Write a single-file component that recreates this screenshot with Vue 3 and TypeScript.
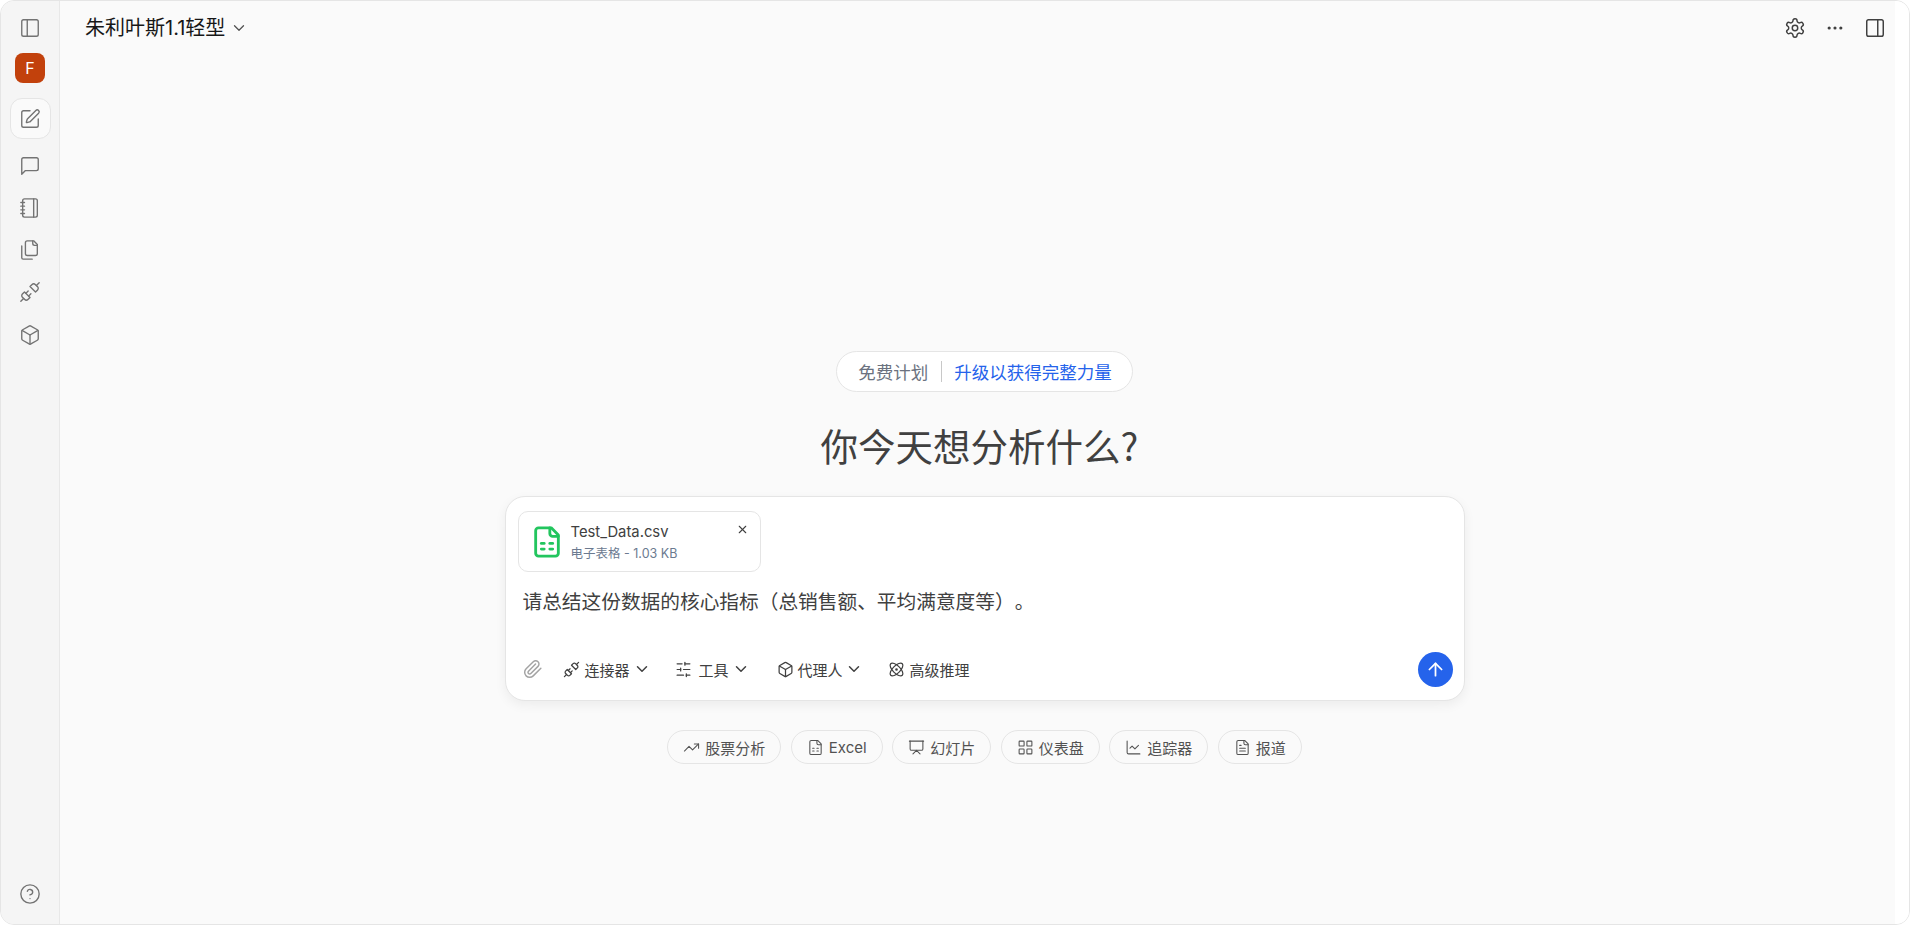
<script setup lang="ts">
import { h } from 'vue'
import type { FunctionalComponent } from 'vue'

const rect = 'M5 3h14a2 2 0 0 1 2 2v14a2 2 0 0 1-2 2H5a2 2 0 0 1-2-2V5a2 2 0 0 1 2-2z'
const icons: Record<string, string[]> = {
  panelLeft: [rect, 'M9 3v18'],
  panelRight: [rect, 'M15 3v18'],
  pen: ['M12 3H5a2 2 0 0 0-2 2v14a2 2 0 0 0 2 2h14a2 2 0 0 0 2-2v-7', 'M18.375 2.625a1 1 0 0 1 3 3l-9.013 9.014a2 2 0 0 1-.853.505l-2.873.84a.5.5 0 0 1-.62-.62l.84-2.873a2 2 0 0 1 .506-.852z'],
  chat: ['M21 15a2 2 0 0 1-2 2H7l-4 4V5a2 2 0 0 1 2-2h14a2 2 0 0 1 2 2z'],
  notebook: ['M2 6h4', 'M2 10h4', 'M2 14h4', 'M2 18h4', 'M6 2h12a2 2 0 0 1 2 2v16a2 2 0 0 1-2 2H6a2 2 0 0 1-2-2V4a2 2 0 0 1 2-2z', 'M16 2v20'],
  files: ['M20 7h-3a2 2 0 0 1-2-2V2', 'M9 18a2 2 0 0 1-2-2V4a2 2 0 0 1 2-2h7l4 4v10a2 2 0 0 1-2 2Z', 'M3 7.6v12.8A1.6 1.6 0 0 0 4.6 22h9.8'],
  plug: ['M19 5l3-3', 'm2 22 3-3', 'M6.3 20.3a2.4 2.4 0 0 0 3.4 0L12 18l-6-6-2.3 2.3a2.4 2.4 0 0 0 0 3.4Z', 'M7.5 13.5 10 11', 'M10.5 16.5 13 14', 'm12 6 6 6 2.3-2.3a2.4 2.4 0 0 0 0-3.4l-2.6-2.6a2.4 2.4 0 0 0-3.4 0Z'],
  box: ['M21 8a2 2 0 0 0-1-1.73l-7-4a2 2 0 0 0-2 0l-7 4A2 2 0 0 0 3 8v8a2 2 0 0 0 1 1.73l7 4a2 2 0 0 0 2 0l7-4A2 2 0 0 0 21 16Z', 'm3.3 7 8.7 5 8.7-5', 'M12 22V12'],
  help: ['M2 12a10 10 0 1 0 20 0a10 10 0 1 0-20 0', 'M9.09 9a3 3 0 0 1 5.83 1c0 2-3 3-3 3', 'M12 17h.01'],
  gear: ['M12.22 2h-.44a2 2 0 0 0-2 2v.18a2 2 0 0 1-1 1.73l-.43.25a2 2 0 0 1-2 0l-.15-.08a2 2 0 0 0-2.73.73l-.22.38a2 2 0 0 0 .73 2.73l.15.1a2 2 0 0 1 1 1.72v.51a2 2 0 0 1-1 1.74l-.15.09a2 2 0 0 0-.73 2.73l.22.38a2 2 0 0 0 2.73.73l.15-.08a2 2 0 0 1 2 0l.43.25a2 2 0 0 1 1 1.73V20a2 2 0 0 0 2 2h.44a2 2 0 0 0 2-2v-.18a2 2 0 0 1 1-1.73l.43-.25a2 2 0 0 1 2 0l.15.08a2 2 0 0 0 2.73-.73l.22-.39a2 2 0 0 0-.73-2.73l-.15-.08a2 2 0 0 1-1-1.74v-.5a2 2 0 0 1 1-1.74l.15-.09a2 2 0 0 0 .73-2.73l-.22-.38a2 2 0 0 0-2.73-.73l-.15.08a2 2 0 0 1-2 0l-.43-.25a2 2 0 0 1-1-1.73V4a2 2 0 0 0-2-2z', 'M9 12a3 3 0 1 0 6 0a3 3 0 1 0-6 0'],
  chevron: ['m6 9 6 6 6-6'],
  close: ['M18 6 6 18', 'm6 6 12 12'],
  sheet: ['M15 2H6a2 2 0 0 0-2 2v16a2 2 0 0 0 2 2h12a2 2 0 0 0 2-2V7Z', 'M14 2v4a2 2 0 0 0 2 2h4', 'M8 13h2', 'M14 13h2', 'M8 17h2', 'M14 17h2'],
  clip: ['m21.44 11.05-9.19 9.19a6 6 0 0 1-8.49-8.49l8.57-8.57A4 4 0 1 1 18 8.84l-8.59 8.57a2 2 0 0 1-2.83-2.83l8.49-8.48'],
  sliders: ['M21 4h-7', 'M10 4H3', 'M21 12h-9', 'M8 12H3', 'M21 20h-5', 'M12 20H3', 'M14 2v4', 'M8 10v4', 'M16 18v4'],
  atom: ['M11 12a1 1 0 1 0 2 0a1 1 0 1 0-2 0', 'M20.2 20.2c2.04-2.03.02-7.36-4.5-11.9-4.54-4.52-9.87-6.54-11.9-4.5-2.04 2.03-.02 7.36 4.5 11.9 4.54 4.52 9.87 6.54 11.9 4.5Z', 'M15.7 15.7c4.52-4.54 6.54-9.87 4.5-11.9-2.03-2.04-7.36-.02-11.9 4.5-4.52 4.54-6.54 9.87-4.5 11.9 2.03 2.04 7.36.02 11.9-4.5Z'],
  trend: ['M22 7 13.5 15.5 8.5 10.5 2 17', 'M16 7h6v6'],
  slides: ['M2 3h20', 'M21 3v11a2 2 0 0 1-2 2H5a2 2 0 0 1-2-2V3', 'm7 21 5-5 5 5'],
  grid: ['M4 3h5a1 1 0 0 1 1 1v5a1 1 0 0 1-1 1H4a1 1 0 0 1-1-1V4a1 1 0 0 1 1-1z', 'M15 3h5a1 1 0 0 1 1 1v5a1 1 0 0 1-1 1h-5a1 1 0 0 1-1-1V4a1 1 0 0 1 1-1z', 'M15 14h5a1 1 0 0 1 1 1v5a1 1 0 0 1-1 1h-5a1 1 0 0 1-1-1v-5a1 1 0 0 1 1-1z', 'M4 14h5a1 1 0 0 1 1 1v5a1 1 0 0 1-1 1H4a1 1 0 0 1-1-1v-5a1 1 0 0 1 1-1z'],
  chart: ['M3 3v16a2 2 0 0 0 2 2h16', 'm19 9-5 5-4-4-3 3'],
  doc: ['M15 2H6a2 2 0 0 0-2 2v16a2 2 0 0 0 2 2h12a2 2 0 0 0 2-2V7Z', 'M14 2v4a2 2 0 0 0 2 2h4', 'M10 9H8', 'M16 13H8', 'M16 17H8'],
  up: ['m5 12 7-7 7 7', 'M12 19V5'],
}

const Icon: FunctionalComponent<{ name: string; size?: number; sw?: number }> = (p) =>
  h(
    'svg',
    {
      width: p.size ?? 20,
      height: p.size ?? 20,
      viewBox: '0 0 24 24',
      fill: 'none',
      stroke: 'currentColor',
      'stroke-width': p.sw ?? 1.75,
      'stroke-linecap': 'round',
      'stroke-linejoin': 'round',
    },
    icons[p.name].map((d) => h('path', { d })),
  )
Icon.props = ['name', 'size', 'sw']

const navIcons = ['chat', 'notebook', 'files', 'plug', 'box']
const tools = [
  { icon: 'plug', label: '连接器', arrow: true, cls: 'tool-a' },
  { icon: 'sliders', label: '工具', arrow: true, cls: 'tool-b' },
  { icon: 'box', label: '代理人', arrow: true, cls: 'tool-c' },
  { icon: 'atom', label: '高级推理', arrow: false, cls: 'tool-d' },
]
const chips = [
  { icon: 'trend', label: '股票分析' },
  { icon: 'sheet', label: 'Excel' },
  { icon: 'slides', label: '幻灯片' },
  { icon: 'grid', label: '仪表盘' },
  { icon: 'chart', label: '追踪器' },
  { icon: 'doc', label: '报道' },
]
</script>

<template>
  <div class="shell">
    <aside class="side">
      <div class="side-icon first"><Icon name="panelLeft" :size="22" :sw="1.5" /></div>
      <div class="avatar">F</div>
      <div class="new-btn"><Icon name="pen" :size="22" :sw="1.5" /></div>
      <nav class="nav">
        <div v-for="n in navIcons" :key="n" class="side-icon"><Icon :name="n" :size="22" :sw="1.5" /></div>
      </nav>
      <div class="side-icon help"><Icon name="help" :size="22" :sw="1.5" /></div>
    </aside>

    <main class="main">
      <header class="top">
        <div class="title">
          <span>朱利叶斯1.1轻型</span>
          <Icon name="chevron" :size="18" :sw="1.75" class="title-chev" />
        </div>
        <div class="top-right">
          <Icon name="gear" :size="22" :sw="1.6" />
          <svg width="20" height="20" viewBox="0 0 24 24" fill="currentColor" aria-hidden="true">
            <circle cx="5" cy="12" r="1.9" /><circle cx="12" cy="12" r="1.9" /><circle cx="19" cy="12" r="1.9" />
          </svg>
          <Icon name="panelRight" :size="22" :sw="1.6" />
        </div>
      </header>

      <section class="stage">
        <div class="plan">
          <span class="plan-free">免费计划</span>
          <span class="plan-div"></span>
          <span class="plan-up">升级以获得完整力量</span>
        </div>
        <h1 class="headline">你今天想分析什么?</h1>

        <div class="card">
          <div class="attach">
            <Icon name="sheet" :size="34" :sw="2" class="attach-icon" />
            <div class="attach-text">
              <div class="attach-name">Test_Data.csv</div>
              <div class="attach-meta">电子表格 - 1.03 KB</div>
            </div>
            <Icon name="close" :size="13" :sw="2" class="attach-x" />
          </div>
          <p class="prompt">请总结这份数据的核心指标（总销售额、平均满意度等）。</p>
          <div class="toolbar">
            <Icon name="clip" :size="20" :sw="1.75" class="clip" />
            <div v-for="t in tools" :key="t.label" class="tool" :class="t.cls">
              <Icon :name="t.icon" :size="17" :sw="1.75" />
              <span>{{ t.label }}</span>
              <Icon v-if="t.arrow" name="chevron" :size="18" :sw="2" class="tool-chev" />
            </div>
            <button class="send" type="button"><Icon name="up" :size="21" :sw="2" /></button>
          </div>
        </div>

        <div class="chips">
          <div v-for="c in chips" :key="c.label" class="chip">
            <Icon :name="c.icon" :size="17" :sw="1.5" />
            <span>{{ c.label }}</span>
          </div>
        </div>
      </section>
    </main>
  </div>
</template>

<style>
html,
body {
  margin: 0;
  background: #fff;
}
</style>

<style scoped>
.shell {
  display: flex;
  box-sizing: border-box;
  width: 1910px;
  height: 925px;
  border: 1px solid #e5e5e5;
  border-radius: 14px;
  overflow: hidden;
  background: #fafafa;
  font-family: Inter, "Noto Sans CJK SC", sans-serif;
  color: #404040;
  text-spacing-trim: space-all;
}

.side {
  display: flex;
  flex-direction: column;
  align-items: center;
  flex: none;
  width: 59px;
  box-sizing: border-box;
  background: #f5f5f5;
  border-right: 1px solid #e8e8e8;
  color: #737373;
  padding-top: 15px;
  padding-bottom: 18px;
}
.side-icon {
  display: flex;
  align-items: center;
  justify-content: center;
  width: 24px;
  height: 24px;
}
.avatar {
  display: flex;
  align-items: center;
  justify-content: center;
  width: 30px;
  height: 30px;
  margin-top: 13px;
  border-radius: 8px;
  background: #c2410c;
  color: #fff;
  font-size: 16px;
  font-weight: 400;
}
.new-btn {
  display: flex;
  align-items: center;
  justify-content: center;
  box-sizing: border-box;
  width: 41px;
  height: 41px;
  margin-top: 15px;
  border: 1px solid #e5e5e5;
  border-radius: 12px;
  background: #fafafa;
}
.nav {
  display: flex;
  flex-direction: column;
  gap: 18.3px;
  margin-top: 14.5px;
}
.help {
  margin-top: auto;
}

.main {
  position: relative;
  flex: 1;
  min-width: 0;
  display: flex;
  flex-direction: column;
}
.main::after {
  content: "";
  position: absolute;
  top: 0;
  right: 0;
  bottom: 0;
  width: 14px;
  background: #fff;
}

.top {
  display: flex;
  align-items: center;
  justify-content: space-between;
  height: 54px;
  flex: none;
  padding: 0 23px 0 25px;
}
.title {
  display: flex;
  align-items: center;
  gap: 5px;
  font-size: 20px;
  line-height: 26px;
  margin-top: -1px;
  color: #171717;
}
.title-chev {
  color: #525252;
}
.top-right {
  display: flex;
  align-items: center;
  gap: 19px;
  color: #404040;
}

.stage {
  display: flex;
  flex-direction: column;
  align-items: center;
  padding-top: 296px;
}
.plan {
  display: flex;
  align-items: center;
  box-sizing: border-box;
  height: 41px;
  padding: 0 20px 0 21px;
  border: 1px solid #e5e5e5;
  border-radius: 21px;
  background: #fff;
  font-size: 17.5px;
}
.plan-free {
  color: #6b7280;
}
.plan-div {
  width: 1px;
  height: 21px;
  margin: 0 12px 0 13px;
  background: #c8c8c8;
}
.plan-up {
  color: #2563eb;
}
.headline {
  margin: 27px 0 0;
  padding-right: 10px;
  font-family: "Noto Sans CJK SC", sans-serif;
  font-size: 37.5px;
  line-height: 52px;
  font-weight: 400;
  color: #404040;
}

.card {
  box-sizing: border-box;
  width: 960px;
  height: 205px;
  margin-top: 25px;
  padding: 14px 11px 0 12px;
  border: 1px solid #e5e5e5;
  border-radius: 20px;
  background: #fff;
  box-shadow: 0 4px 12px rgba(0, 0, 0, 0.06);
}
.attach {
  position: relative;
  display: flex;
  align-items: center;
  box-sizing: border-box;
  width: 243px;
  height: 61px;
  padding-left: 11px;
  border: 1px solid #e5e5e5;
  border-radius: 10px;
}
.attach-icon {
  color: #22c55e;
  flex: none;
}
.attach-text {
  margin-left: 7px;
  padding-top: 2px;
}
.attach-name {
  font-size: 14.8px;
  line-height: 20px;
  color: #404040;
}
.attach-meta {
  margin-top: 3px;
  font-size: 12.5px;
  line-height: 18px;
  color: #6b7a90;
}
.attach-x {
  position: absolute;
  top: 11px;
  right: 11px;
  color: #404040;
}
.prompt {
  margin: 16px 0 0 5px;
  font-size: 19.7px;
  line-height: 28px;
  color: #404040;
}
.toolbar {
  display: flex;
  align-items: center;
  height: 36px;
  margin-top: 35px;
  font-size: 15px;
  color: #404040;
}
.clip {
  margin-left: 5px;
  color: #a3a3a3;
  flex: none;
}
.tool {
  display: flex;
  align-items: center;
  gap: 5px;
}
.tool-chev {
  margin-left: -2px;
}
.tool-a {
  margin-left: 20px;
}
.tool-b {
  margin-left: 24px;
  gap: 7px;
}
.tool-b .tool-chev {
  margin-left: -4px;
}
.tool-c {
  margin-left: 27px;
  gap: 4px;
}
.tool-d {
  margin-left: 25px;
}
.send {
  display: flex;
  align-items: center;
  justify-content: center;
  width: 35px;
  height: 35px;
  margin-left: auto;
  padding: 0;
  border: 0;
  border-radius: 50%;
  background: #2563eb;
  color: #fff;
}

.chips {
  display: flex;
  gap: 9.5px;
  margin-top: 29px;
}
.chip {
  display: flex;
  align-items: center;
  gap: 5px;
  box-sizing: border-box;
  height: 34px;
  padding: 0 15px;
  border: 1px solid #e5e5e5;
  border-radius: 17px;
  background: #fafafa;
  font-size: 15px;
  color: #525252;
}
</style>
